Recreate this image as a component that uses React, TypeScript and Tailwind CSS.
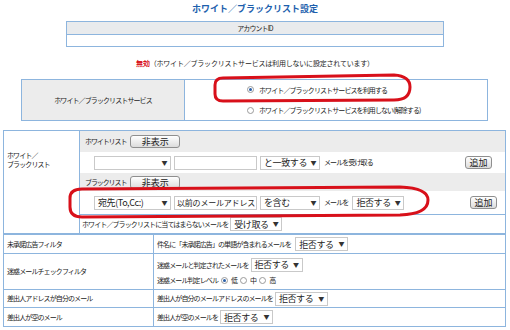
import React from 'react';

// Whitelist / blacklist settings page

const jp = "font-['Noto_Sans_CJK_JP','Noto_Sans',sans-serif]";

function Select({ label, w }: { label: string; w: string }) {
  return (
    <span
      className={`${w} h-[14px] border border-[#c9c9c9] bg-white flex items-center justify-between pl-[3px] pr-[3px] text-[9px] tracking-[-0.4px] text-[#222] shrink-0`}
    >
      <span className="whitespace-nowrap leading-none">{label}</span>
      <span className="text-[6px] leading-none text-[#333]">▼</span>
    </span>
  );
}

function Btn({ label, w }: { label: string; w: string }) {
  return (
    <span
      className={`${w} h-[13px] border border-[#8f8f8f] rounded-[3px] bg-gradient-to-b from-white to-[#dcdcdc] flex items-center justify-center text-[9px] tracking-normal leading-none text-[#222] shrink-0`}
    >
      {label}
    </span>
  );
}

function Radio({ on }: { on?: boolean }) {
  return (
    <span className="w-[7px] h-[7px] rounded-full border border-[#9a9a9a] bg-white flex items-center justify-center shrink-0">
      {on && <span className="w-[3px] h-[3px] rounded-full bg-[#2a5fa8]" />}
    </span>
  );
}

function Row({ label, h, last, children }: { label: string; h: string; last?: boolean; children: React.ReactNode }) {
  return (
    <div className={`flex ${h} ${last ? '' : 'border-b border-[#8db5de]'}`}>
      <div className="w-[150px] border-r border-[#8db5de] pl-[3px] flex items-center">{label}</div>
      <div className="flex-1 flex flex-col justify-center pl-[3px] gap-[3px]">{children}</div>
    </div>
  );
}

export default function App() {
  return (
    <div className={`w-[510px] h-[330px] bg-white relative overflow-hidden whitespace-nowrap ${jp} text-[#222] text-[7px] tracking-[-0.9px]`}>
      {/* Title */}
      <div className="h-[21px] flex justify-center pt-[2px] text-[9px] font-bold tracking-[0px] text-[#1d5fad]">
        ホワイト／ブラックリスト設定
      </div>

      {/* Account table */}
      <div className="ml-[66px] w-[378px] border border-[#8db5de]">
        <div className="h-[13px] bg-[#e9ebed] border-b border-[#8db5de] flex items-center justify-center">アカウントID</div>
        <div className="h-[11px] bg-white" />
      </div>

      {/* Status */}
      <div className="h-[32px] flex items-center justify-center tracking-[-0.2px]">
        <span className="text-[#d8101a] font-bold">無効</span>
        <span>（ホワイト／ブラックリストサービスは利用しないに設定されています）</span>
      </div>

      {/* Service table */}
      <div className="ml-[21px] w-[467px] h-[42px] border border-[#8db5de] flex">
        <div className="w-[163px] bg-[#ececec] border-r border-[#8db5de] flex items-center justify-center">
          ホワイト／ブラックリストサービス
        </div>
        <div className="flex-1 flex flex-col justify-center gap-[10px] pl-[62px]">
          <div className="flex items-center gap-[5px]">
            <Radio on />
            <span>ホワイト／ブラックリストサービスを利用する</span>
          </div>
          <div className="flex items-center gap-[5px]">
            <Radio />
            <span>ホワイト／ブラックリストサービスを利用しない(解除する)</span>
          </div>
        </div>
      </div>

      {/* Main table */}
      <div className="ml-[3px] mt-[9px] w-[503px] border border-[#8db5de]">
        <div className="flex border-b-2 border-[#8db5de]">
          <div className="w-[76px] border-r border-[#8db5de] pl-[3px] pt-[20px] leading-[9px]">
            ホワイト／<br />ブラックリスト
          </div>
          <div className="flex-1 flex flex-col">
            <div className="h-[21px] bg-[#ececec] flex items-center pl-[5px] gap-[4px]">
              <span className="tracking-[-1.1px]">ホワイトリスト</span>
              <Btn label="非表示" w="w-[50px]" />
            </div>
            <div className="h-[21px] bg-white flex items-center pl-[14px] pr-[13px]">
              <Select label="" w="w-[77px]" />
              <span className="w-[83px] h-[14px] border border-[#c9c9c9] ml-[3px] shrink-0" />
              <span className="ml-[3px]"><Select label="と一致する" w="w-[60px]" /></span>
              <span className="ml-[4px]">メールを受け取る</span>
              <span className="ml-auto"><Btn label="追加" w="w-[27px]" /></span>
            </div>
            <div className="h-[18px] bg-[#ececec] flex items-center pl-[5px] gap-[4px]">
              <span className="tracking-[-1.1px]">ブラックリスト</span>
              <Btn label="非表示" w="w-[50px]" />
            </div>
            <div className="h-[23px] bg-white flex items-center pl-[14px] pr-[8px]">
              <Select label="宛先(To,Cc:)" w="w-[77px]" />
              <span className="w-[83px] h-[14px] border border-[#c9c9c9] ml-[3px] shrink-0 flex items-center pl-[2px] text-[8px] tracking-[-0.2px]">以前のメールアドレス</span>
              <span className="ml-[3px]"><Select label="を含む" w="w-[60px]" /></span>
              <span className="ml-[4px]">メールを</span>
              <span className="ml-[4px]"><Select label="拒否する" w="w-[52px]" /></span>
              <span className="ml-auto"><Btn label="追加" w="w-[27px]" /></span>
            </div>
            <div className="h-[19px] bg-white border-t border-[#8db5de] flex items-center pl-[2px]">
              <span>ホワイト／ブラックリストに当てはまらないメールを</span>
              <span className="ml-[2px]"><Select label="受け取る" w="w-[52px]" /></span>
            </div>
          </div>
        </div>

        <Row label="未承諾広告フィルタ" h="h-[19px]">
          <div className="flex items-center gap-[4px]">
            <span>件名に「未承諾広告」の単語が含まれるメールを</span>
            <Select label="拒否する" w="w-[53px]" />
          </div>
        </Row>
        <Row label="迷惑メールチェックフィルタ" h="h-[36px]">
          <div className="flex items-center gap-[2px]">
            <span>迷惑メールと判定されたメールを</span>
            <Select label="拒否する" w="w-[52px]" />
          </div>
          <div className="flex items-center gap-[3px]">
            <span>迷惑メール判定レベル</span>
            <Radio on />
            <span>低</span>
            <Radio />
            <span>中</span>
            <Radio />
            <span>高</span>
          </div>
        </Row>
        <Row label="差出人アドレスが自分のメール" h="h-[18px]">
          <div className="flex items-center gap-[2px]">
            <span>差出人が自分のメールアドレスのメールを</span>
            <Select label="拒否する" w="w-[53px]" />
          </div>
        </Row>
        <Row label="差出人が空のメール" h="h-[18px]" last>
          <div className="flex items-center gap-[2px]">
            <span>差出人が空のメールを</span>
            <Select label="拒否する" w="w-[53px]" />
          </div>
        </Row>
      </div>

      {/* Red hand-drawn highlights */}
      <svg className="absolute left-0 top-0 pointer-events-none" width="510" height="330" viewBox="0 0 510 330">
        <path
          d="M223 78 L394 75 Q410 76 410 87 Q410 100 394 100 L223 101 Q215 101 215 94 L215 85 Q215 78 223 78 Z"
          fill="none"
          stroke="#d8101a"
          strokeWidth="3"
        />
        <path
          d="M82 189 L400 187 Q428 188 428 200 Q428 214 400 215 L82 217 Q70 217 70 207 L70 198 Q70 189 82 189 Z"
          fill="none"
          stroke="#d8101a"
          strokeWidth="3"
        />
      </svg>
    </div>
  );
}
